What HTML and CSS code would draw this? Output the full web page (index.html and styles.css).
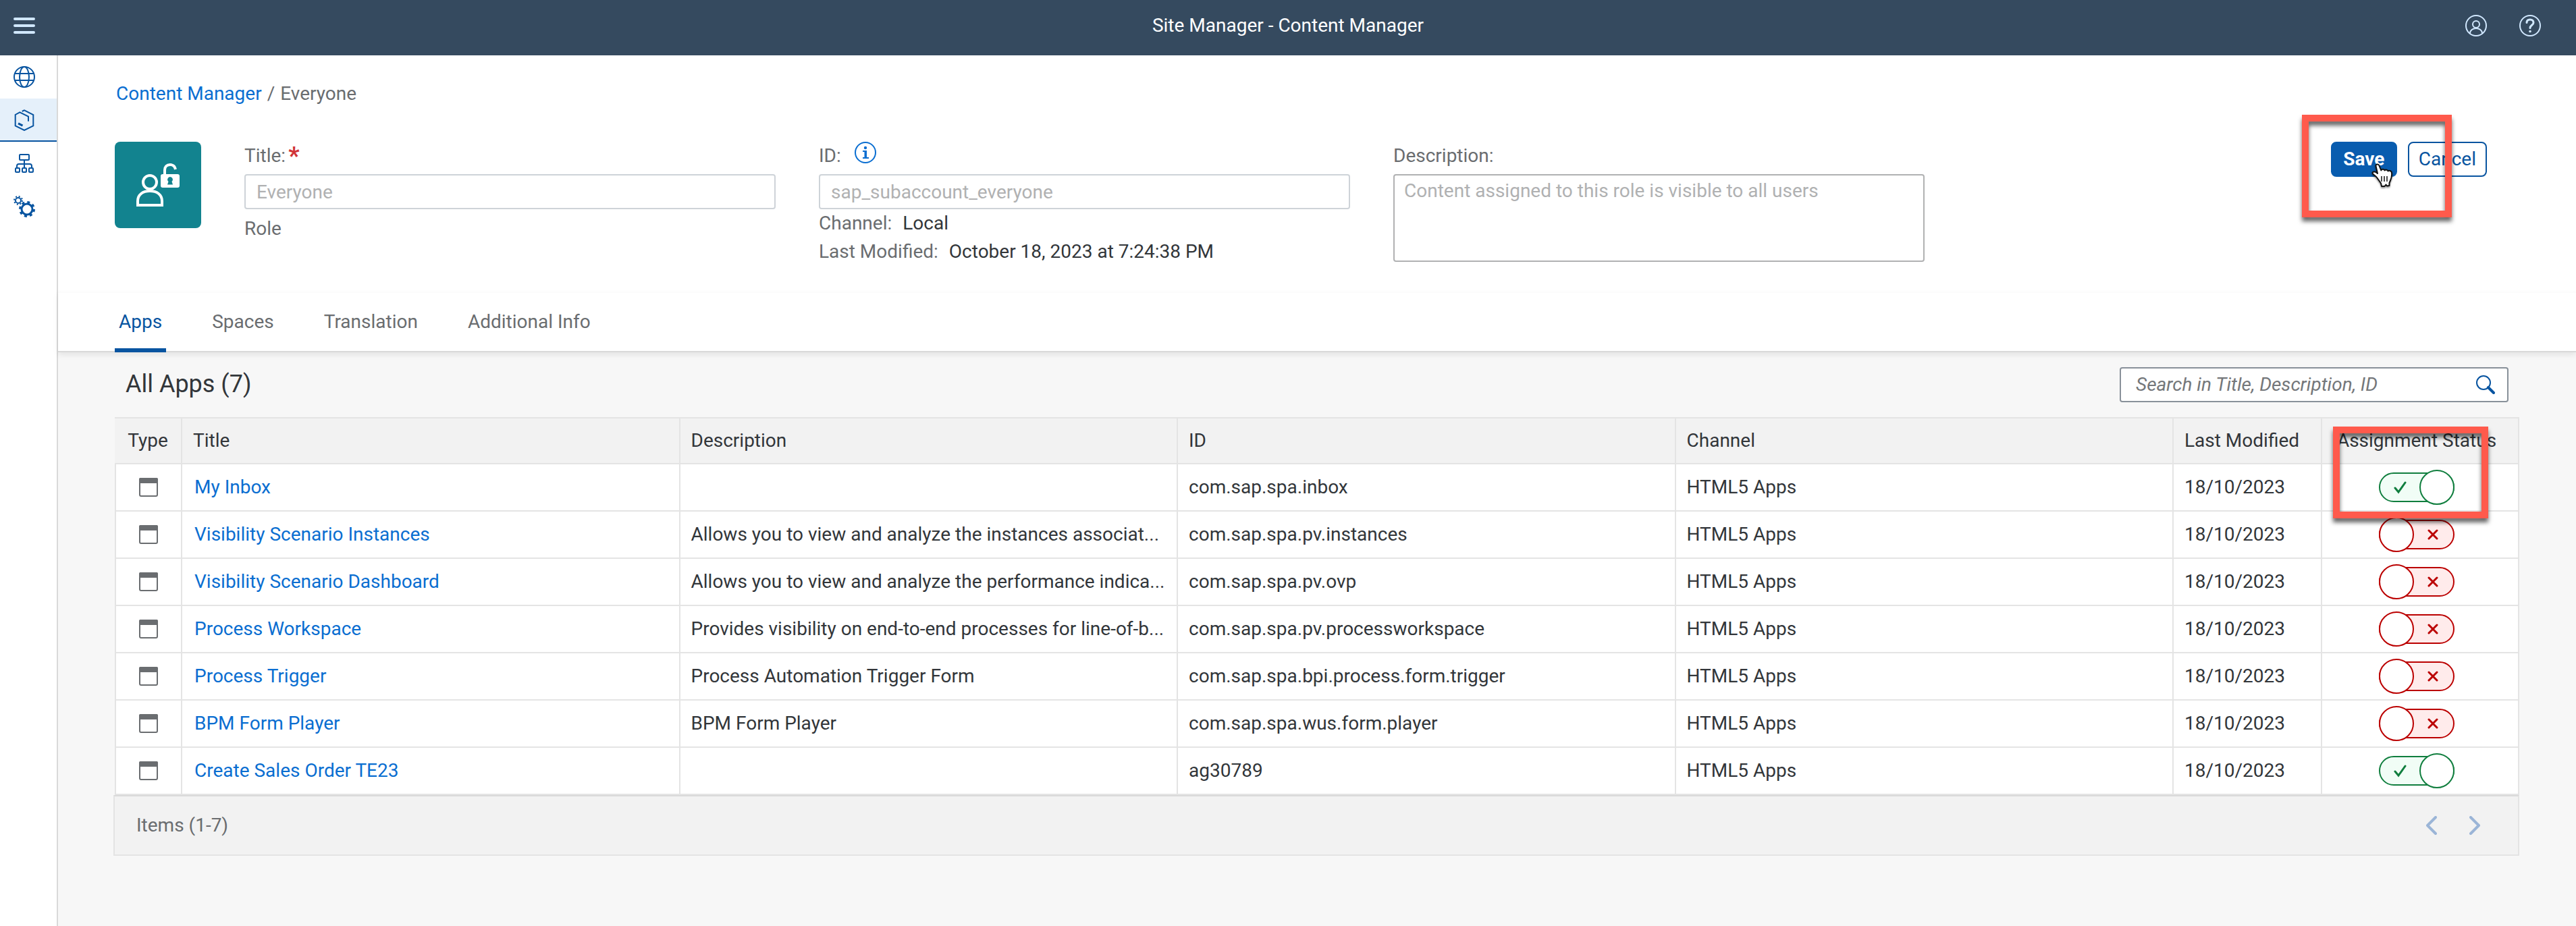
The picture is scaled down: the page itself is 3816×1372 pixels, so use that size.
FILE: index.html
```html
<!DOCTYPE html>
<html lang="en">
<head>
<meta charset="utf-8">
<title>Site Manager - Content Manager</title>
<link rel="stylesheet" href="styles.css">
</head>
<body>
<svg class="defs" aria-hidden="true">
  <symbol id="window" viewBox="0 0 28 28"><rect x="1" y="1" width="26" height="26" rx="2" fill="none" stroke="currentColor" stroke-width="2"/><path d="M2 0h24a2 2 0 0 1 2 2v6H0V2a2 2 0 0 1 2-2z" fill="currentColor"/></symbol>
</svg>

<header class="shell">
  <button class="icon-btn" aria-label="Menu"><svg width="32" height="24" viewBox="0 0 32 24" fill="none" stroke="currentColor" stroke-width="4" stroke-linecap="round"><path d="M2 2h28M2 12h28M2 22h28"/></svg></button>
  <h1 class="shell-title">Site Manager - Content Manager</h1>
  <div class="shell-actions">
    <button class="icon-btn" aria-label="Profile"><svg width="32" height="32" viewBox="0 0 32 32" fill="none" stroke="currentColor" stroke-width="2"><circle cx="16" cy="16" r="15"/><circle cx="16" cy="14" r="5"/><path d="M7 28v-1a9 7 0 0 1 18 0v1"/></svg></button>
    <button class="icon-btn" aria-label="Help"><svg width="32" height="32" viewBox="0 0 32 32" fill="none" stroke="currentColor" stroke-width="2"><circle cx="16" cy="16" r="15"/><path stroke-width="3" stroke-linecap="round" d="M11 11.500c0-3 2-4.500 5-4.500s5 1.800 5 4.500c0 4-5 3.500-5 8"/><circle cx="16" cy="24.500" r="1.800" fill="currentColor" stroke="none"/></svg></button>
  </div>
</header>

<div class="body">
  <nav class="side" aria-label="Main">
    <a href="#sites" aria-label="Sites"><svg width="32" height="32" viewBox="0 0 32 32" fill="none" stroke="currentColor" stroke-width="2"><circle cx="16" cy="16" r="15"/><ellipse cx="16" cy="16" rx="7" ry="15"/><path d="M2 11h28M2 21h28"/></svg></a>
    <a href="#content" class="current" aria-label="Content Manager"><svg width="32" height="32" viewBox="0 0 32 32" fill="none" stroke="currentColor" stroke-width="2"><path d="M12.700 3L16 1.300 29.300 8v16.500L16 31 2.700 24.500V8l6.600-3.700L22 10.700v7"/><path stroke-width="3" d="M7 20.800l6.500 3.400"/></svg></a>
    <a href="#channels" aria-label="Channel Manager"><svg width="32" height="32" viewBox="0 0 32 32" fill="none" stroke="currentColor" stroke-width="2"><rect x="9" y="3" width="14" height="8" rx="1"/><rect x="3" y="23" width="6" height="6" rx="1"/><rect x="13" y="23" width="6" height="6" rx="1"/><rect x="23" y="23" width="6" height="6" rx="1"/><path d="M16 11v12M5 23v-3q0-3 3-3h16q3 0 3 3v3"/></svg></a>
    <a href="#settings" aria-label="Settings"><svg width="32" height="32" viewBox="0 0 32 32" fill="none" stroke="currentColor"><circle cx="7" cy="7" r="4" stroke-width="2"/><circle cx="7" cy="7" r="6" stroke-width="2" stroke-dasharray="2 2.710"/><circle cx="20" cy="20" r="8" stroke-width="3"/><circle cx="20" cy="20" r="10.500" stroke-width="3" stroke-dasharray="4 4.250"/></svg></a>
  </nav>

  <main class="main">
    <section class="head">
      <div class="crumbs"><a href="#content">Content Manager</a><span>/</span><span>Everyone</span></div>
      <div class="facts">
        <div class="avatar"><svg width="64" height="76" viewBox="0 0 64 76" fill="none" stroke="#fff" stroke-width="4"><circle cx="20" cy="34" r="10"/><path d="M2 68v-6c0-10 8-15 18-15s18 5 18 15v6z"/><path d="M42 22v-6c0-5 3-8 8-8 4 0 7 2 8 7"/><rect x="36" y="22" width="28" height="20" rx="3" fill="#fff" stroke="none"/><path fill="#12838f" stroke="none" d="M50 26a4 4 0 0 1 2.500 7l1.500 4.500h-8l1.500-4.500A4 4 0 0 1 50 26z"/></svg></div>
        <div class="field">
          <label for="title">Title:<b class="req">*</b></label>
          <input id="title" type="text" value="Everyone" disabled>
          <p class="role">Role</p>
        </div>
        <div class="field">
          <label for="rid">ID:<svg class="info" width="32" height="32" viewBox="0 0 32 32" fill="none" stroke="currentColor" stroke-width="2"><circle cx="16" cy="16" r="15"/><circle cx="16" cy="9" r="2.200" fill="currentColor" stroke="none"/><path stroke="none" fill="currentColor" d="M12 13h6v10h3v2h-9v-2h2.500v-8H12z"/></svg></label>
          <input id="rid" type="text" value="sap_subaccount_everyone" disabled>
          <dl class="meta"><div><dt>Channel:</dt><dd>Local</dd></div><div><dt>Last Modified:</dt><dd>October 18, 2023 at 7:24:38 PM</dd></div></dl>
        </div>
        <div class="field">
          <label for="desc">Description:</label>
          <textarea id="desc" disabled>Content assigned to this role is visible to all users</textarea>
        </div>
        <div class="actions">
          <button class="btn primary">Save</button>
          <button class="btn">Cancel</button>
          <span class="mark mark-save"></span>
          <svg class="cursor" width="36" height="40" viewBox="0 0 36 40"><path d="M7.500 4c-.5-3 4-3.500 5-.5l2.800 7c1-2.500 4.700-2 5.200 0 1.500-1.500 4.500-1 5 1 2-1.500 5.500 0 5.500 2.500.5 4-.5 8-2 11.500L27.500 29v4l-3.500.5-1.500-2-2 2.500H16l-1-4.500L9 21c-2-3-7.500-5-6.500-7.500 1.500-2 5-1 7.500 1.500z" fill="#fff" stroke="#111" stroke-width="2" stroke-linejoin="round"/><path d="M16 19v8M20 19v8M24 19v8" stroke="#111" stroke-width="1.500"/></svg>
        </div>
      </div>
    </section>

    <nav class="tabs" aria-label="Sections">
      <a href="#apps" class="on">Apps</a><a href="#spaces">Spaces</a><a href="#translation">Translation</a><a href="#info">Additional Info</a>
    </nav>

    <section class="list">
      <div class="toolbar">
        <h2>All Apps (7)</h2>
        <label class="search"><input type="search" placeholder="Search in Title, Description, ID" aria-label="Search"><svg width="28" height="28" viewBox="0 0 28 28" fill="none" stroke="currentColor"><circle cx="11" cy="11" r="10" stroke-width="2"/><path d="M18 18l8 8" stroke-width="4" stroke-linecap="round"/></svg></label>
      </div>
      <div class="grid">
        <table>
          <colgroup><col class="c-type"><col><col><col><col><col class="c-date"><col class="c-status"></colgroup>
          <thead><tr><th class="type">Type</th><th>Title</th><th>Description</th><th>ID</th><th>Channel</th><th>Last Modified</th><th class="status">Assignment Status</th></tr></thead>
          <tbody>
            <tr><td class="type"><svg><use href="#window"/></svg></td><td><a href="#1">My Inbox</a></td><td></td><td>com.sap.spa.inbox</td><td>HTML5 Apps</td><td>18/10/2023</td><td class="status"><input type="checkbox" class="switch" aria-label="Assign My Inbox" checked></td></tr>
            <tr><td class="type"><svg><use href="#window"/></svg></td><td><a href="#2">Visibility Scenario Instances</a></td><td>Allows you to view and analyze the instances associat...</td><td>com.sap.spa.pv.instances</td><td>HTML5 Apps</td><td>18/10/2023</td><td class="status"><input type="checkbox" class="switch" aria-label="Assign Visibility Scenario Instances"></td></tr>
            <tr><td class="type"><svg><use href="#window"/></svg></td><td><a href="#3">Visibility Scenario Dashboard</a></td><td>Allows you to view and analyze the performance indica...</td><td>com.sap.spa.pv.ovp</td><td>HTML5 Apps</td><td>18/10/2023</td><td class="status"><input type="checkbox" class="switch" aria-label="Assign Visibility Scenario Dashboard"></td></tr>
            <tr><td class="type"><svg><use href="#window"/></svg></td><td><a href="#4">Process Workspace</a></td><td>Provides visibility on end-to-end processes for line-of-b...</td><td>com.sap.spa.pv.processworkspace</td><td>HTML5 Apps</td><td>18/10/2023</td><td class="status"><input type="checkbox" class="switch" aria-label="Assign Process Workspace"></td></tr>
            <tr><td class="type"><svg><use href="#window"/></svg></td><td><a href="#5">Process Trigger</a></td><td>Process Automation Trigger Form</td><td>com.sap.spa.bpi.process.form.trigger</td><td>HTML5 Apps</td><td>18/10/2023</td><td class="status"><input type="checkbox" class="switch" aria-label="Assign Process Trigger"></td></tr>
            <tr><td class="type"><svg><use href="#window"/></svg></td><td><a href="#6">BPM Form Player</a></td><td>BPM Form Player</td><td>com.sap.spa.wus.form.player</td><td>HTML5 Apps</td><td>18/10/2023</td><td class="status"><input type="checkbox" class="switch" aria-label="Assign BPM Form Player"></td></tr>
            <tr><td class="type"><svg><use href="#window"/></svg></td><td><a href="#7">Create Sales Order TE23</a></td><td></td><td>ag30789</td><td>HTML5 Apps</td><td>18/10/2023</td><td class="status"><input type="checkbox" class="switch" aria-label="Assign Create Sales Order TE23" checked></td></tr>
          </tbody>
        </table>
        <span class="mark mark-status"></span>
      </div>
      <footer class="pager">
        <span>Items (1-7)</span>
        <div class="pager-nav">
          <button class="icon-btn" aria-label="Previous page" disabled><svg width="16" height="28" viewBox="0 0 16 28" fill="none" stroke="currentColor" stroke-width="4" stroke-linecap="round" stroke-linejoin="round"><path d="M14 2L2 14l12 12"/></svg></button>
          <button class="icon-btn" aria-label="Next page" disabled><svg width="16" height="28" viewBox="0 0 16 28" fill="none" stroke="currentColor" stroke-width="4" stroke-linecap="round" stroke-linejoin="round"><path d="M2 2l12 12L2 26"/></svg></button>
        </div>
      </footer>
    </section>
  </main>
</div>
</body>
</html>
```

FILE: styles.css
```css
* { box-sizing: border-box; }

body {
  margin: 0;
  min-height: 100vh;
  display: flex;
  flex-direction: column;
  font: 28px/42px Roboto, "Noto Sans", sans-serif;
  color: #32363a;
  background: #f7f7f7;
}

h1, h2, p, dl, dd { margin: 0; font-weight: 400; }
a { color: #0a6ed1; text-decoration: none; }
svg { display: block; flex: none; }
.defs { position: absolute; width: 0; height: 0; }
button, input, textarea { font: inherit; }
.icon-btn { display: flex; padding: 0; border: 0; background: none; color: inherit; }

/* shell bar */
.shell {
  display: grid;
  grid-template-columns: 1fr auto 1fr;
  align-items: center;
  height: 82px;
  padding: 0 20px 6px;
  background: #354a5f;
  color: #d1e8ff;
}
.shell-title { font-size: 28px; font-weight: 400; color: #fff; }
.shell-actions { display: flex; justify-content: flex-end; gap: 48px; padding-right: 32px; }

.body { flex: 1; display: flex; }

/* side navigation */
.side {
  flex: none;
  width: 86px;
  background: #fff;
  border-right: 2px solid #d9d9d9;
}
.side a {
  display: flex;
  align-items: center;
  height: 64px;
  padding-left: 20px;
  color: #0854a0;
}
.side .current { background: #e5f0fa; box-shadow: inset 0 -2px #0854a0; }

.main { flex: 1; min-width: 0; }

/* object header */
.head { padding: 36px 132px 38px 84px; background: #fff; }
.crumbs { display: flex; gap: 8px; padding-left: 2px; color: #6a6d70; }
.facts { display: flex; align-items: flex-start; margin-top: 50px; }
.avatar {
  flex: none;
  display: grid;
  place-items: center;
  width: 128px;
  height: 128px;
  border-radius: 8px;
  background: #12838f;
}
.field { flex: 0 1 787px; margin-left: 64px; }
.field label { display: flex; height: 42px; color: #6a6d70; }
.req { margin-left: 4px; color: #d13438; font-size: 36px; }
.info { margin-left: 20px; color: #0a6ed1; }
.field input, .field textarea {
  display: block;
  width: 100%;
  height: 52px;
  margin-top: 6px;
  padding: 0 16px;
  border: 2px solid #ced3d8;
  border-radius: 4px;
  background: #fff;
  color: #b0b1b2;
}
.field textarea {
  height: 130px;
  padding: 2px 14px;
  border-color: #b0b1b2;
  resize: none;
}
.role { margin-top: 8px; color: #6a6d70; }
.meta div { display: flex; gap: 16px; }
.meta dt { color: #6a6d70; }

.actions { position: relative; display: flex; gap: 16px; margin-left: auto; }
.btn {
  min-width: 98px;
  height: 52px;
  padding: 0 14px;
  border: 2px solid #0854a0;
  border-radius: 8px;
  background: #fff;
  color: #0854a0;
}
.primary { background: #085caf; border-color: #085caf; color: #fff; font-weight: 700; }

/* callouts drawn over the page */
.mark {
  position: absolute;
  border: 10px solid #ff5a4c;
  filter: drop-shadow(0 6px 3px rgba(0, 0, 0, .6));
  pointer-events: none;
}
.mark-save { top: -40px; right: 52px; width: 222px; height: 152px; }
.mark-status { top: 14px; right: 46px; width: 230px; height: 136px; }
.cursor {
  position: absolute;
  top: 32px;
  right: 136px;
  filter: drop-shadow(0 2px 1px rgba(0, 0, 0, .4));
}

/* tabs */
.tabs {
  position: relative;
  display: flex;
  gap: 62px;
  height: 90px;
  padding-left: 84px;
  border-bottom: 2px solid #d9d9d9;
  border-top: 2px solid #fcfcfc;
  background: #fff;
  box-shadow: 0 4px 8px rgba(0, 0, 0, .08);
}
.tabs a { height: 88px; padding: 22px 6px 0; color: #6a6d70; }
.tabs .on {
  color: #0854a0;
  background: linear-gradient(#0854a0, #0854a0) bottom / 100% 6px no-repeat;
}

/* app list */
.list { padding: 22px 84px 0 82px; }
.toolbar { display: flex; justify-content: space-between; padding: 0 16px 22px 18px; }
.toolbar h2 { font-size: 36px; line-height: 50px; }
.search {
  display: flex;
  align-items: center;
  width: 576px;
  height: 52px;
  padding: 0 18px 0 22px;
  border: 2px solid #89919a;
  border-radius: 4px;
  background: #fff;
  color: #0854a0;
}
.search input { flex: 1; min-width: 0; padding: 0; border: 0; outline: 0; background: none; color: #32363a; }
.search input::placeholder { color: #74777a; font-style: italic; opacity: 1; }

.grid { position: relative; margin-left: 2px; }
table { width: 100%; table-layout: fixed; border-collapse: separate; border-spacing: 0; border-top: 2px solid #e4e4e4; }
.c-type { width: 100px; }
.c-date { width: 220px; }
.c-status { width: 292px; }
th, td {
  height: 70px;
  padding: 0 16px;
  border-right: 2px solid #e4e4e4;
  border-bottom: 2px solid #e4e4e4;
  background: #fff;
  text-align: left;
  font-weight: 400;
  white-space: nowrap;
  overflow: hidden;
  text-overflow: ellipsis;
}
th { height: 68px; background: #f2f2f2; }
td:first-child { border-left: 2px solid #e4e4e4; }
td a { padding-left: 2px; }
.type, .status { text-align: center; }
.status { padding-right: 26px; }
.type svg { width: 28px; height: 28px; margin: 0 auto; color: #6a6d70; }

/* assignment switch: a pill with the state mark, and a round handle over it */
.switch {
  appearance: none;
  position: relative;
  display: block;
  width: 112px;
  height: 52px;
  margin: 0 auto;
  color: #b00;
}
.switch:checked { color: #107e3e; }
.switch::before, .switch::after {
  content: "";
  position: absolute;
  box-sizing: border-box;
  border: 2px solid currentColor;
}
.switch::before {
  inset: 4px 0;
  border-radius: 22px;
  background: #ffebeb url("data:image/svg+xml,%3Csvg xmlns='http://www.w3.org/2000/svg' width='16' height='16'%3E%3Cpath d='M2 2l12 12M14 2L2 14' stroke='%23b00' stroke-width='3' stroke-linecap='round'/%3E%3C/svg%3E") 70px center no-repeat;
}
.switch:checked::before {
  background: #f1fdf6 url("data:image/svg+xml,%3Csvg xmlns='http://www.w3.org/2000/svg' width='20' height='20'%3E%3Cpath d='M2 11l5 6L17 3' fill='none' stroke='%23107e3e' stroke-width='3' stroke-linecap='round'/%3E%3C/svg%3E") 20px center no-repeat;
}
.switch::after {
  top: 0;
  left: 0;
  width: 52px;
  height: 52px;
  border-radius: 50%;
  background: #fff;
}
.switch:checked::after { left: 60px; }

.pager {
  display: flex;
  align-items: center;
  justify-content: space-between;
  height: 90px;
  padding: 0 56px 0 32px;
  border: 2px solid #e4e4e4;
  border-top-color: #d9d9d9;
  background: #f2f2f2;
  color: #6a6d70;
}
.pager-nav { display: flex; gap: 48px; color: #9bb5d7; }
```
